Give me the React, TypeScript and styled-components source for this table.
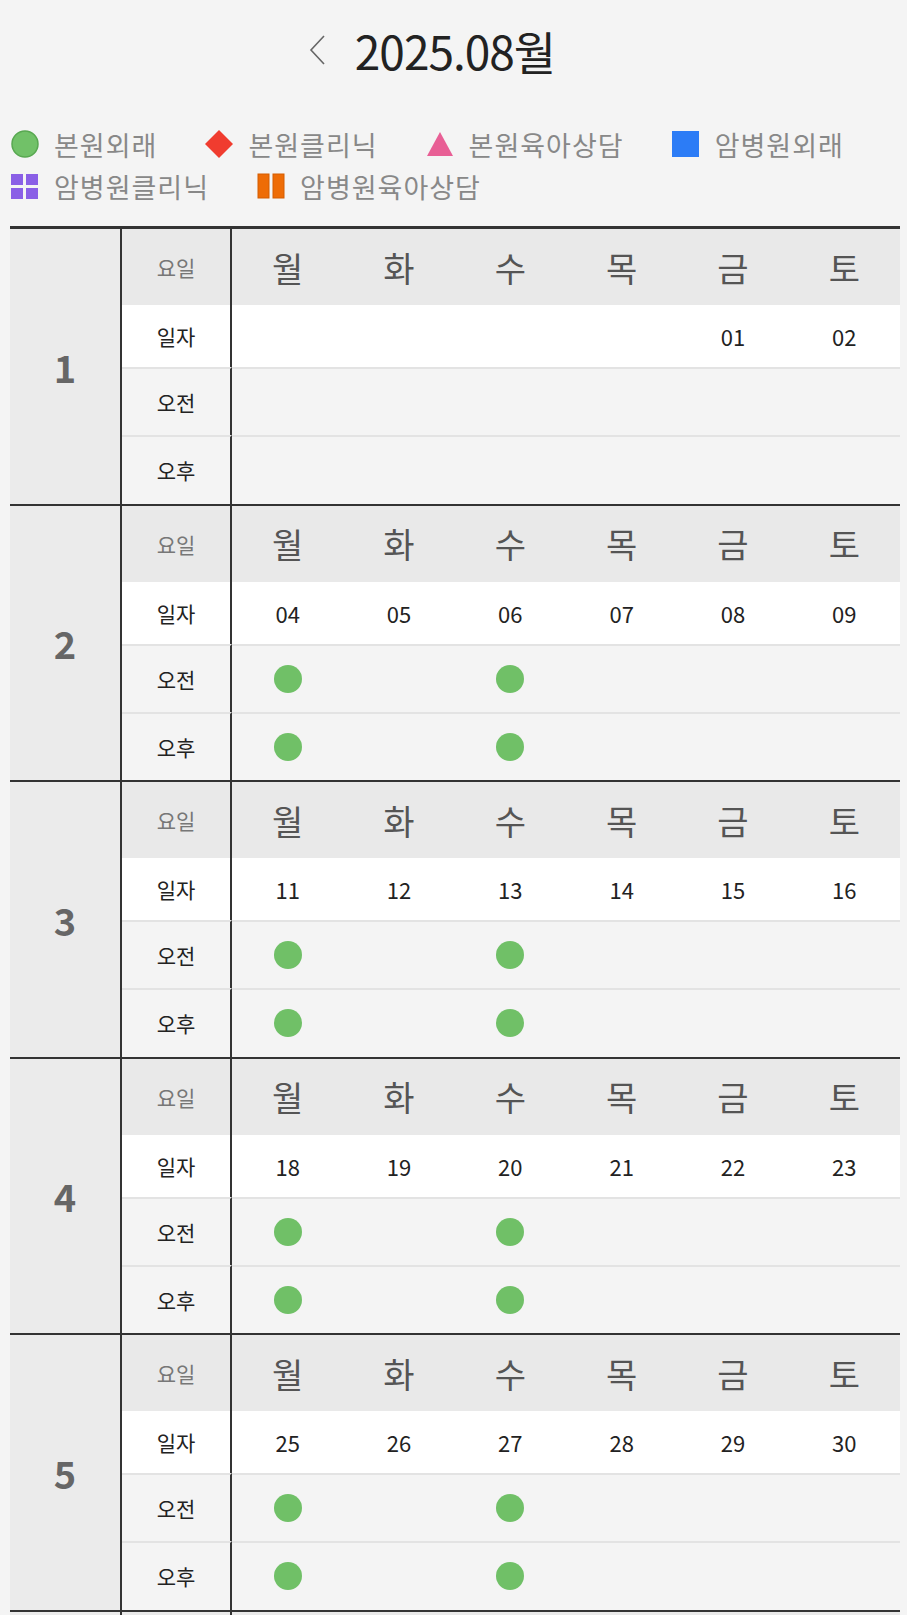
import styled, { createGlobalStyle } from 'styled-components';

const GlobalStyle = createGlobalStyle`
  html, body {
    margin: 0;
    padding: 0;
    background: #f4f4f4;
  }
  body {
    font-family: "Noto Sans CJK KR", "Noto Sans", sans-serif;
    color: #222;
  }
`;

type Kind = 'head' | 'date' | 'am' | 'pm';
type LegendKind = 'circle' | 'diamond' | 'triangle' | 'square' | 'grid' | 'bars';

const DAYS = ['월', '화', '수', '목', '금', '토'];

const LEGEND: { kind: LegendKind; label: string }[] = [
  { kind: 'circle', label: '본원외래' },
  { kind: 'diamond', label: '본원클리닉' },
  { kind: 'triangle', label: '본원육아상담' },
  { kind: 'square', label: '암병원외래' },
  { kind: 'grid', label: '암병원클리닉' },
  { kind: 'bars', label: '암병원육아상담' },
];

// dates per week, '' = no date; am/pm = which columns have 본원외래
const WEEKS = [
  { no: 1, dates: ['', '', '', '', '01', '02'], am: [] as number[], pm: [] as number[] },
  { no: 2, dates: ['04', '05', '06', '07', '08', '09'], am: [0, 2], pm: [0, 2] },
  { no: 3, dates: ['11', '12', '13', '14', '15', '16'], am: [0, 2], pm: [0, 2] },
  { no: 4, dates: ['18', '19', '20', '21', '22', '23'], am: [0, 2], pm: [0, 2] },
  { no: 5, dates: ['25', '26', '27', '28', '29', '30'], am: [0, 2], pm: [0, 2] },
  { no: 6, dates: ['', '', '', '', '', ''], am: [], pm: [] },
];

const LegendIcon = ({ kind }: { kind: LegendKind }) => {
  switch (kind) {
    case 'circle':
      return (
        <svg width="30" height="30" viewBox="0 0 30 30">
          <circle cx="15" cy="15" r="13" fill="#71c168" stroke="#58a851" strokeWidth="1.5" />
        </svg>
      );
    case 'diamond':
      return (
        <svg width="30" height="30" viewBox="0 0 30 30">
          <polygon points="15,1 29,15 15,29 1,15" fill="#f03c2f" />
        </svg>
      );
    case 'triangle':
      return (
        <svg width="30" height="30" viewBox="0 0 30 30">
          <polygon points="15,3 28,27 2,27" fill="#e85f95" />
        </svg>
      );
    case 'square':
      return (
        <svg width="30" height="30" viewBox="0 0 30 30">
          <rect x="1" y="2" width="27" height="26" fill="#2c7cf6" />
        </svg>
      );
    case 'grid':
      return (
        <svg width="30" height="30" viewBox="0 0 30 30">
          <rect x="1" y="3" width="12" height="11" fill="#8a5fe6" />
          <rect x="16" y="3" width="12" height="11" fill="#8a5fe6" />
          <rect x="1" y="17" width="12" height="11" fill="#8a5fe6" />
          <rect x="16" y="17" width="12" height="11" fill="#8a5fe6" />
        </svg>
      );
    case 'bars':
      return (
        <svg width="30" height="30" viewBox="0 0 30 30">
          <rect x="2" y="3" width="11" height="24" fill="#ee6c06" stroke="#d45c00" strokeWidth="1" />
          <rect x="17" y="3" width="11" height="24" fill="#ee6c06" stroke="#d45c00" strokeWidth="1" />
        </svg>
      );
  }
};

const Chevron = ({ hidden }: { hidden?: boolean }) => (
  <ChevronBox $hidden={hidden}>
    <svg width="18" height="32" viewBox="0 0 18 32">
      {hidden ? (
        <polyline points="3,2 16,16 3,30" fill="none" stroke="#666" strokeWidth="1.6" />
      ) : (
        <polyline points="15,2 2,16 15,30" fill="none" stroke="#666" strokeWidth="1.6" />
      )}
    </svg>
  </ChevronBox>
);

const App = () => (
  <Page>
    <GlobalStyle />
    <TitleBar>
      <Chevron />
      <Title>2025.08월</Title>
      <Chevron hidden />
    </TitleBar>

    <Legend>
      {LEGEND.map((item) => (
        <LegendItem key={item.label}>
          <LegendIcon kind={item.kind} />
          <span>{item.label}</span>
        </LegendItem>
      ))}
    </Legend>

    <Calendar>
      {WEEKS.map((week) => (
        <Week key={week.no}>
          <WeekNo>{week.no}</WeekNo>

          <Label $kind="head">요일</Label>
          {DAYS.map((d) => (
            <DayName key={d}>{d}</DayName>
          ))}

          <Label $kind="date">일자</Label>
          {week.dates.map((d, i) => (
            <Cell key={i} $kind="date">
              {d}
            </Cell>
          ))}

          <Label $kind="am">오전</Label>
          {DAYS.map((_, i) => (
            <Cell key={i} $kind="am">
              {week.am.includes(i) && <Dot />}
            </Cell>
          ))}

          <Label $kind="pm">오후</Label>
          {DAYS.map((_, i) => (
            <Cell key={i} $kind="pm">
              {week.pm.includes(i) && <Dot />}
            </Cell>
          ))}
        </Week>
      ))}
    </Calendar>
  </Page>
);

const Page = styled.div`
  padding: 0 7px 0 10px;
`;

const TitleBar = styled.header`
  height: 100px;
  padding-bottom: 4px;
  display: flex;
  align-items: center;
  justify-content: center;
  gap: 28px;
`;

const ChevronBox = styled.span<{ $hidden?: boolean }>`
  display: flex;
  visibility: ${(p) => (p.$hidden ? 'hidden' : 'visible')};
`;

const Title = styled.h1`
  margin: 0;
  font-size: 46px;
  font-weight: 400;
  color: #222;
  letter-spacing: -1px;
  line-height: 1;
`;

const Legend = styled.div`
  display: flex;
  flex-wrap: wrap;
  column-gap: 47px;
  margin-top: 19px;
  margin-bottom: 19px;
`;

const LegendItem = styled.div`
  display: flex;
  align-items: center;
  gap: 14px;
  height: 42px;
  font-size: 27px;
  letter-spacing: 1px;
  color: #888;

  svg {
    flex: none;
  }
`;

const Calendar = styled.div`
  display: flex;
  flex-direction: column;
`;

const Week = styled.section`
  display: grid;
  grid-template-columns: 112px 110px repeat(6, 1fr);
  grid-template-rows: 76px 62px 68px 68.5px;
  border-top: 2px solid #333;

  &:first-child {
    border-top-width: 3px;
  }
`;

const WeekNo = styled.div`
  grid-row: 1 / span 4;
  display: flex;
  align-items: center;
  justify-content: center;
  background: #ebebeb;
  border-right: 2px solid #333;
  font-size: 38px;
  font-weight: 700;
  color: #666;
`;

const bgFor = (k: Kind) => (k === 'head' ? '#e9e9e9' : k === 'date' ? '#ffffff' : '#f4f4f4');

const Cell = styled.div<{ $kind: Kind }>`
  display: flex;
  align-items: center;
  justify-content: center;
  background: ${(p) => bgFor(p.$kind)};
  border-top: ${(p) => (p.$kind === 'am' || p.$kind === 'pm' ? '2px solid #e3e3e3' : 'none')};
  font-size: 22px;
  color: #222;
`;

const Label = styled(Cell)`
  border-right: 2px solid #333;
  font-size: 21px;
  color: ${(p) => (p.$kind === 'head' ? '#777' : '#222')};
`;

const DayName = styled.div`
  display: flex;
  align-items: center;
  justify-content: center;
  background: #e9e9e9;
  font-size: 34px;
  color: #555;
`;

const Dot = styled.span`
  width: 28px;
  height: 28px;
  border-radius: 50%;
  background: #70c067;
`;

export default App;
